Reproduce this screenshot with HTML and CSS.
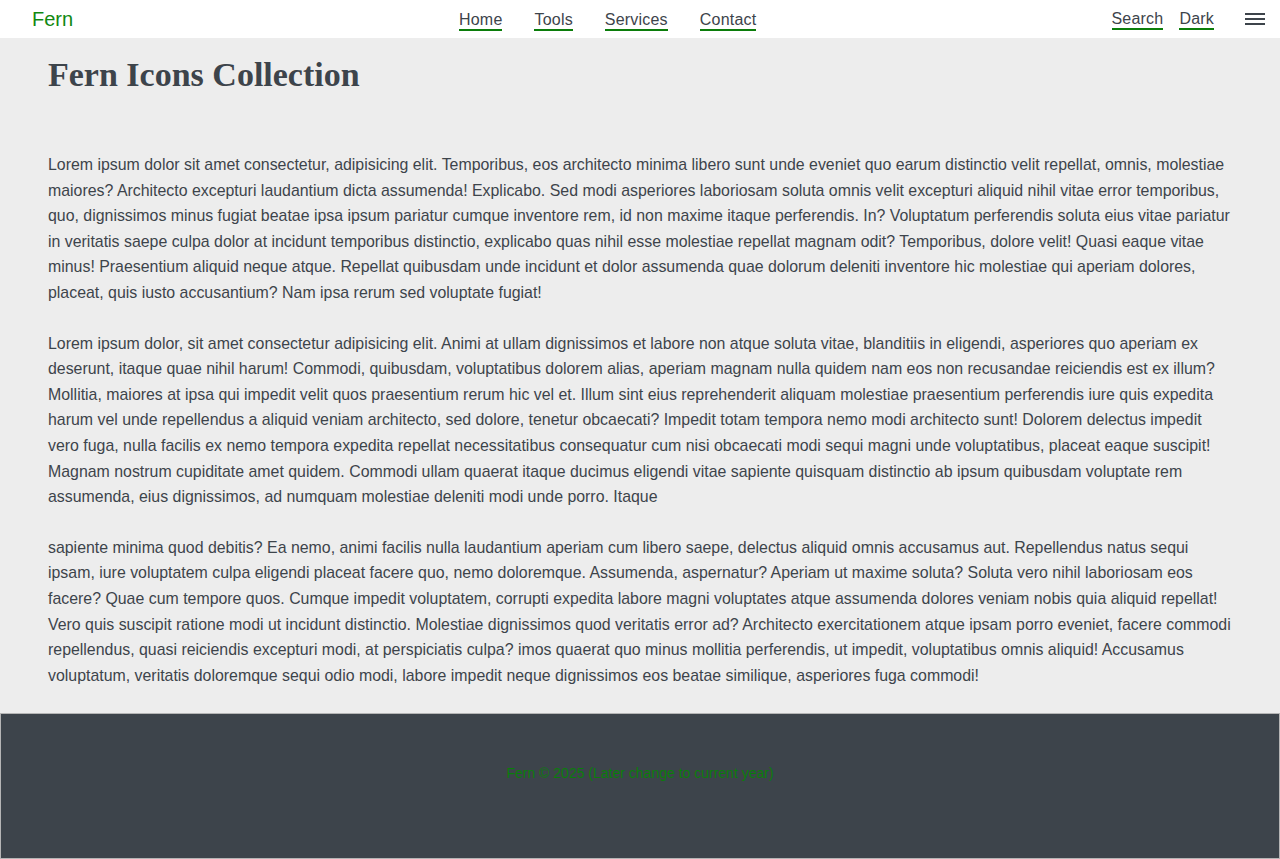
FILE: index.html
```html
<!DOCTYPE html>
<html lang="en">
<head>
<meta charset="utf-8">
<title>Fern Icons Collection</title>
<link rel="stylesheet" href="styles.css">
</head>
<body>
<header class="topbar">
  <a class="brand" href="#">Fern</a>
  <nav class="nav">
    <a href="#">Home</a>
    <a href="#">Tools</a>
    <a href="#">Services</a>
    <a href="#">Contact</a>
  </nav>
  <div class="actions">
    <a href="#">Search</a>
    <a href="#">Dark</a>
    <button class="menu" aria-label="Menu">
      <svg width="20" height="12" viewBox="0 0 20 12"><rect x="0" y="0" width="20" height="2" fill="#3d444b"/><rect x="0" y="5" width="20" height="2" fill="#3d444b"/><rect x="0" y="10" width="20" height="2" fill="#3d444b"/></svg>
    </button>
  </div>
</header>
<main class="content">
  <h1 class="title">Fern Icons Collection</h1>
  <p>Lorem ipsum dolor sit amet consectetur, adipisicing elit. Temporibus, eos architecto minima libero sunt unde eveniet quo earum distinctio velit repellat, omnis, molestiae maiores? Architecto excepturi laudantium dicta assumenda! Explicabo. Sed modi asperiores laboriosam soluta omnis velit excepturi aliquid nihil vitae error temporibus, quo, dignissimos minus fugiat beatae ipsa ipsum pariatur cumque inventore rem, id non maxime itaque perferendis. In? Voluptatum perferendis soluta eius vitae pariatur in veritatis saepe culpa dolor at incidunt temporibus distinctio, explicabo quas nihil esse molestiae repellat magnam odit? Temporibus, dolore velit! Quasi eaque vitae minus! Praesentium aliquid neque atque. Repellat quibusdam unde incidunt et dolor assumenda quae dolorum deleniti inventore hic molestiae qui aperiam dolores, placeat, quis iusto accusantium? Nam ipsa rerum sed voluptate fugiat!</p>
  <p>Lorem ipsum dolor, sit amet consectetur adipisicing elit. Animi at ullam dignissimos et labore non atque soluta vitae, blanditiis in eligendi, asperiores quo aperiam ex deserunt, itaque quae nihil harum! Commodi, quibusdam, voluptatibus dolorem alias, aperiam magnam nulla quidem nam eos non recusandae reiciendis est ex illum? Mollitia, maiores at ipsa qui impedit velit quos praesentium rerum hic vel et. Illum sint eius reprehenderit aliquam molestiae praesentium perferendis iure quis expedita harum vel unde repellendus a aliquid veniam architecto, sed dolore, tenetur obcaecati? Impedit totam tempora nemo modi architecto sunt! Dolorem delectus impedit vero fuga, nulla facilis ex nemo tempora expedita repellat necessitatibus consequatur cum nisi obcaecati modi sequi magni unde voluptatibus, placeat eaque suscipit! Magnam nostrum cupiditate amet quidem. Commodi ullam quaerat itaque ducimus eligendi vitae sapiente quisquam distinctio ab ipsum quibusdam voluptate rem assumenda, eius dignissimos, ad numquam molestiae deleniti modi unde porro. Itaque</p>
  <p>sapiente minima quod debitis? Ea nemo, animi facilis nulla laudantium aperiam cum libero saepe, delectus aliquid omnis accusamus aut. Repellendus natus sequi ipsam, iure voluptatem culpa eligendi placeat facere quo, nemo doloremque. Assumenda, aspernatur? Aperiam ut maxime soluta? Soluta vero nihil laboriosam eos facere? Quae cum tempore quos. Cumque impedit voluptatem, corrupti expedita labore magni voluptates atque assumenda dolores veniam nobis quia aliquid repellat! Vero quis suscipit ratione modi ut incidunt distinctio. Molestiae dignissimos quod veritatis error ad? Architecto exercitationem atque ipsam porro eveniet, facere commodi repellendus, quasi reiciendis excepturi modi, at perspiciatis culpa? imos quaerat quo minus mollitia perferendis, ut impedit, voluptatibus omnis aliquid! Accusamus voluptatum, veritatis doloremque sequi odio modi, labore impedit neque dignissimos eos beatae similique, asperiores fuga commodi!</p>
</main>
<footer class="footer">
  <p>Fern © 2025 (Later change to current year)</p>
</footer>
</body>
</html>
```
FILE: styles.css
```css
* { box-sizing: border-box; }
html, body { margin: 0; padding: 0; }
body {
  background: #ededed;
  color: #3d444b;
  font-family: "Liberation Sans", Arial, sans-serif;
  font-size: 16px;
}
a { color: inherit; }
.topbar {
  height: 38px;
  background: #ffffff;
  display: flex;
  align-items: center;
  padding: 0 15px 0 32px;
}
.brand {
  color: #118811;
  text-decoration: none;
  font-size: 20px;
  width: 427px;
}
.nav {
  display: flex;
  gap: 32px;
  padding-top: 2px;
}
.nav a, .actions a {
  text-decoration: none;
  color: #3d444b;
  border-bottom: 2px solid #0b7d0b;
  line-height: 18px;
  padding-top: 2px;
  letter-spacing: 0.2px;
}
.actions {
  margin-left: auto;
  display: flex;
  justify-content: flex-end;
  align-items: center;
  gap: 16px;
}
.menu {
  background: none;
  border: 0;
  padding: 0;
  margin-left: 15px;
  display: flex;
}
.content {
  padding: 0 48px;
}
.title {
  font-family: "Liberation Serif", "DejaVu Serif", serif;
  font-weight: bold;
  font-size: 34px;
  margin: 0;
  padding: 17px 0 57px;
  line-height: 40px;
}
.content p {
  margin: 0 0 25px;
  line-height: 25.6px;
  font-size: 15.9px;
}
.footer {
  background: #3d444b;
  border: 1px solid #b5b5b5;
  height: 146px;
  display: flex;
  justify-content: center;
  padding-top: 51px;
}
.footer p {
  margin: 0;
  color: #0b7d0b;
  font-size: 14px;
}
```
